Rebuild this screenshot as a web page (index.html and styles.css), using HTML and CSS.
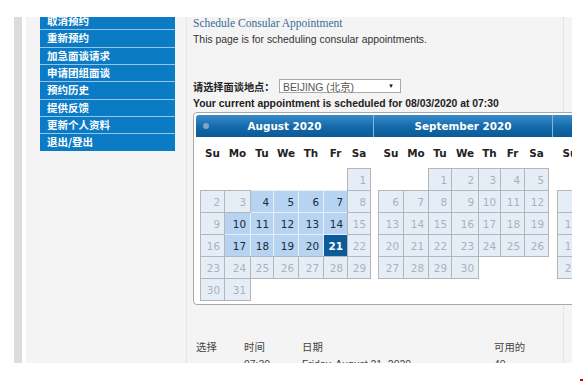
FILE: index.html
```html
<!DOCTYPE html>
<html lang="zh-CN">
<head>
<meta charset="utf-8">
<title>Schedule Consular Appointment</title>
<link rel="stylesheet" href="styles.css">
</head>
<body>
<div class="page">
  <div class="strip"></div>
  <div class="sidebar">
    <ul class="menu">
      <li>取消预约</li>
      <li>重新预约</li>
      <li>加急面谈请求</li>
      <li>申请团组面谈</li>
      <li>预约历史</li>
      <li>提供反馈</li>
      <li>更新个人资料</li>
      <li>退出/登出</li>
    </ul>
  </div>
  <div class="main">
    <div class="content">
      <h1 class="title">Schedule Consular Appointment</h1>
      <p class="intro">This page is for scheduling consular appointments.</p>
      <div class="post-row">
        <span class="post-label">请选择面谈地点：</span>
        <div class="select"><span class="select-text">BEIJING (北京)</span><span class="arrow">▼</span></div>
      </div>
      <p class="current">Your current appointment is scheduled for 08/03/2020 at 07:30</p>
      <div class="cal">
        <div class="month m1">
          <div class="mhead"><span class="prev"></span><span class="mtitle">August 2020</span><span></span></div>
          <table class="days aug">
            <colgroup><col class="c24"><col class="c26"><col class="c23"><col class="c25"><col class="c25"><col class="c24"><col class="c23"></colgroup>
            <thead><tr><th>Su</th><th>Mo</th><th>Tu</th><th>We</th><th>Th</th><th>Fr</th><th>Sa</th></tr></thead>
            <tbody>
              <tr><td class="empty"></td><td class="empty"></td><td class="empty"></td><td class="empty"></td><td class="empty"></td><td class="empty"></td><td class="off">1</td></tr>
              <tr><td class="off">2</td><td class="off">3</td><td class="av">4</td><td class="av">5</td><td class="av">6</td><td class="av">7</td><td class="off">8</td></tr>
              <tr><td class="off">9</td><td class="av">10</td><td class="av">11</td><td class="av">12</td><td class="av">13</td><td class="av">14</td><td class="off">15</td></tr>
              <tr><td class="off">16</td><td class="av">17</td><td class="av">18</td><td class="av">19</td><td class="av">20</td><td class="sel">21</td><td class="off">22</td></tr>
              <tr><td class="off">23</td><td class="off">24</td><td class="off">25</td><td class="off">26</td><td class="off">27</td><td class="off">28</td><td class="off">29</td></tr>
              <tr><td class="off">30</td><td class="off">31</td><td class="empty"></td><td class="empty"></td><td class="empty"></td><td class="empty"></td><td class="empty"></td></tr>
            </tbody>
          </table>
        </div>
        <div class="month m2">
          <div class="mhead"><span></span><span class="mtitle">September 2020</span><span></span></div>
          <table class="days sep">
            <colgroup><col class="c25"><col class="c25"><col class="c23"><col class="c27"><col class="c22"><col class="c24"><col class="c24"></colgroup>
            <thead><tr><th>Su</th><th>Mo</th><th>Tu</th><th>We</th><th>Th</th><th>Fr</th><th>Sa</th></tr></thead>
            <tbody>
              <tr><td class="empty"></td><td class="empty"></td><td class="off">1</td><td class="off">2</td><td class="off">3</td><td class="off">4</td><td class="off">5</td></tr>
              <tr><td class="off">6</td><td class="off">7</td><td class="off">8</td><td class="off">9</td><td class="off">10</td><td class="off">11</td><td class="off">12</td></tr>
              <tr><td class="off">13</td><td class="off">14</td><td class="off">15</td><td class="off">16</td><td class="off">17</td><td class="off">18</td><td class="off">19</td></tr>
              <tr><td class="off">20</td><td class="off">21</td><td class="off">22</td><td class="off">23</td><td class="off">24</td><td class="off">25</td><td class="off">26</td></tr>
              <tr><td class="off">27</td><td class="off">28</td><td class="off">29</td><td class="off">30</td><td class="empty"></td><td class="empty"></td><td class="empty"></td></tr>
            </tbody>
          </table>
        </div>
        <div class="month m3">
          <div class="mhead"><span></span><span class="mtitle">October 2020</span><span></span></div>
          <table class="days oct">
            <colgroup><col class="c25"><col class="c25"><col class="c23"><col class="c27"><col class="c22"><col class="c24"><col class="c24"></colgroup>
            <thead><tr><th>Su</th><th>Mo</th><th>Tu</th><th>We</th><th>Th</th><th>Fr</th><th>Sa</th></tr></thead>
            <tbody>
              <tr><td class="empty"></td><td class="empty"></td><td class="empty"></td><td class="empty"></td><td class="off">1</td><td class="off">2</td><td class="off">3</td></tr>
              <tr><td class="off">4</td><td class="off">5</td><td class="off">6</td><td class="off">7</td><td class="off">8</td><td class="off">9</td><td class="off">10</td></tr>
              <tr><td class="off">11</td><td class="off">12</td><td class="off">13</td><td class="off">14</td><td class="off">15</td><td class="off">16</td><td class="off">17</td></tr>
              <tr><td class="off">18</td><td class="off">19</td><td class="off">20</td><td class="off">21</td><td class="off">22</td><td class="off">23</td><td class="off">24</td></tr>
              <tr><td class="off">25</td><td class="off">26</td><td class="off">27</td><td class="off">28</td><td class="off">29</td><td class="off">30</td><td class="off">31</td></tr>
            </tbody>
          </table>
        </div>
      </div>
      <table class="slots">
        <colgroup><col class="s1"><col class="s2"><col class="s3"><col class="s4"></colgroup>
        <thead><tr><th>选择</th><th>时间</th><th>日期</th><th>可用的</th></tr></thead>
        <tbody><tr><td></td><td>07:30</td><td>Friday, August 21, 2020</td><td>40</td></tr></tbody>
      </table>
    </div>
  </div>
</div>
<div class="foot"><span class="mark"></span></div>
</body>
</html>
```

FILE: styles.css
```css
html, body {
  margin: 0;
  padding: 0;
  background: #fff;
}

body {
  font-family: "Liberation Sans", "Noto Sans CJK SC", sans-serif;
  color: #333;
}

.page {
  display: flex;
  margin-top: 17px;
  height: 346px;
  overflow: hidden;
}

.strip {
  margin-left: 14px;
  margin-right: 4px;
  width: 8px;
  background: #dcdcdc;
}

.sidebar {
  box-sizing: border-box;
  width: 161px;
  background: #f4f4f4;
  border-right: 1px solid #e6e6e6;
  padding-left: 14px;
}

.menu {
  list-style: none;
  margin: -4px 0 0 0;
  padding: 0;
  width: 135px;
}

.menu li {
  height: 16.33px;
  line-height: 16.33px;
  background: #0b7bc6;
  border-bottom: 1px solid #93c5ea;
  color: #fff;
  font-family: "Noto Sans CJK SC", sans-serif;
  font-weight: bold;
  font-size: 10.5px;
  padding-left: 7px;
}

.menu li:last-child {
  border-bottom: none;
}

.main {
  width: 385px;
  background: #f4f4f4;
  overflow: hidden;
  padding-left: 6px;
  box-sizing: border-box;
}

.content {
  width: 370px;
  height: 100%;
  border-right: 1px dotted #d6d6d6;
}

.title {
  margin: 0;
  font-family: "Liberation Serif", serif;
  font-weight: normal;
  font-size: 11.5px;
  line-height: 13px;
  color: #3b6b98;
}

.intro {
  margin: 4px 0 0 0;
  font-size: 10.4px;
  line-height: 12px;
  color: #333;
}

.post-row {
  display: flex;
  align-items: center;
  margin-top: 33px;
  height: 14px;
}

.post-label {
  width: 86px;
  font-family: "Noto Sans CJK SC", sans-serif;
  font-weight: bold;
  font-size: 10.2px;
  color: #222;
  white-space: nowrap;
}

.select {
  box-sizing: border-box;
  display: flex;
  align-items: center;
  justify-content: space-between;
  width: 122px;
  height: 14px;
  border: 1px solid #a9a9a9;
  background: #fff;
  padding: 0 6px 0 3px;
  font-size: 10.4px;
  color: #555;
}

.select-text {
  font-family: "Liberation Sans", "Noto Sans CJK SC", sans-serif;
}

.arrow {
  font-size: 6px;
  color: #111;
}

.current {
  margin: 5px 0 0 0;
  font-size: 10.4px;
  line-height: 12px;
  font-weight: bold;
  color: #222;
}

.cal {
  display: flex;
  align-items: flex-start;
  width: max-content;
  margin-top: 2px;
  border: 1px solid #a8a8a8;
  border-radius: 4px;
  background: #fff;
  padding: 2px 2px 3px 2px;
  font-family: "DejaVu Sans", Verdana, sans-serif;
}

.month.m1 { width: 177px; }
.month.m2 { width: 179px; }
.month.m3 { width: 179px; }

.mhead {
  display: grid;
  grid-template-columns: 1fr auto 1fr;
  align-items: center;
  height: 22px;
  background: linear-gradient(#3a8ccb, #1369a8 55%, #0b5a97);
  color: #fff;
  font-weight: bold;
  font-size: 10.4px;
}

.m1 .mhead {
  border-radius: 3px 0 0 0;
}

.m2 .mhead, .m3 .mhead {
  border-left: 1px solid #86b6dc;
}

.prev {
  width: 6px;
  height: 6px;
  border-radius: 50%;
  background: #7ea6c9;
  margin-left: 7px;
}

.mtitle {
  text-align: center;
}

.days {
  border-collapse: collapse;
  table-layout: fixed;
  width: 170px;
  margin-left: 4px;
}

.m2 .days, .m3 .days {
  margin-left: 5px;
}

.c22 { width: 22px; }
.c23 { width: 23px; }
.c24 { width: 24px; }
.c25 { width: 25px; }
.c26 { width: 26px; }
.c27 { width: 27px; }

.days th {
  height: 31px;
  padding: 0;
  font-size: 10.4px;
  font-weight: bold;
  color: #222;
  text-align: center;
}

.days tbody tr {
  height: 22px;
}

.days td {
  padding: 0 4px 0 0;
  font-size: 10.4px;
  text-align: right;
  vertical-align: middle;
}

.days td.off {
  background: #e5edf7;
  border: 1px double #b6b6b6;
  color: #a9b2bc;
}

.days td.av {
  background: #b6d3f1;
  border: 1px solid #e6eff8;
  color: #1d2a36;
}

.days td.sel {
  background: #0c5b99;
  border: 1px solid #0c5b99;
  color: #fff;
  font-weight: bold;
}

.days td.empty {
  border: none;
  background: transparent;
}

.slots {
  border-collapse: collapse;
  table-layout: fixed;
  width: 360px;
  margin: 33px 0 0 3px;
  font-family: "Noto Sans CJK SC", "Liberation Sans", sans-serif;
  font-size: 10.4px;
  color: #444;
}

.s1 { width: 48px; }
.s2 { width: 58px; }
.s3 { width: 192px; }
.s4 { width: 62px; }

.slots th {
  height: 17px;
  padding: 0;
  font-weight: normal;
  text-align: left;
}

.slots td {
  height: 19px;
  padding: 0;
  text-align: left;
  font-family: "Liberation Sans", sans-serif;
}

.foot {
  display: flex;
  justify-content: flex-end;
  padding-top: 16px;
}

.mark {
  width: 3px;
  height: 2px;
  margin-right: 1px;
  background: #d40000;
}
```
